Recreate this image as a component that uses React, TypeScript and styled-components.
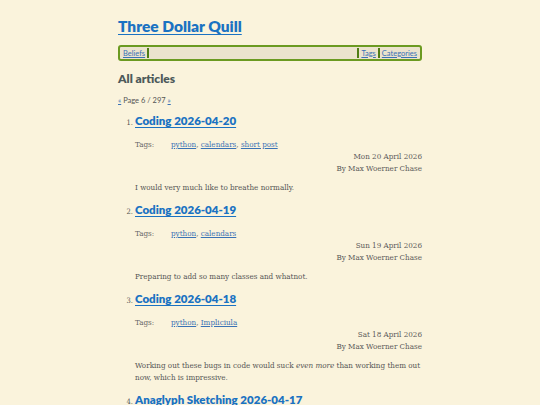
import React from "react";
import styled, { createGlobalStyle } from "styled-components";

const Global = createGlobalStyle`
  html, body { margin: 0; padding: 0; background: #faf3dc; }
  body { font-family: "DejaVu Serif Condensed", "DejaVu Serif", serif; color: #555; }
`;

const Page = styled.div`
  width: 304px;
  margin: 0 auto;
  padding-top: 15px;
`;

const SiteTitle = styled.h1`
  margin: 0;
  font-family: Lato, sans-serif;
  font-weight: 800;
  font-size: 15.5px;
  line-height: 22px;
  a { color: #1a72c2; text-decoration: underline; text-decoration-thickness: 1px; text-underline-offset: 2px; }
`;

const Nav = styled.nav`
  margin-top: 8px;
  display: flex;
  align-items: center;
  height: 12px;
  border: 2px solid #6b9a21;
  border-radius: 3px;
  background: #ebe3cd;
  padding: 0 1px;
  font-family: Lato, sans-serif;
  font-size: 7.5px;
`;

const NavLink = styled.a`
  color: #3a72b5;
  text-decoration: underline;
  padding: 0 2px;
`;

const Sep = styled.span`
  width: 2px;
  height: 10px;
  background: #4f7d15;
`;

const Spacer = styled.span`
  flex: 1;
`;

const H2 = styled.h2`
  margin: 10px 0 0;
  font-family: Lato, sans-serif;
  font-weight: 800;
  font-size: 12px;
  line-height: 16px;
  color: #4d5a5a;
`;

const Pager = styled.p`
  margin: 9px 0 0;
  font-family: Lato, sans-serif;
  font-size: 7.5px;
  line-height: 10px;
  color: #555;
  a { color: #3a72b5; }
`;

const List = styled.ol`
  margin: 6px 0 0;
  padding-left: 17px;
  font-size: 7.5px;
`;

const Item = styled.li`
  margin-bottom: 7px;
  &::marker { color: #555; }
`;

const ItemTitle = styled.h3`
  margin: 0;
  font-family: Lato, sans-serif;
  font-weight: 800;
  font-size: 11.5px;
  line-height: 18px;
  a { color: #1a72c2; text-decoration: underline; text-underline-offset: 2px; }
`;

const TagRow = styled.div`
  margin-top: 9px;
  display: flex;
  font-size: 8px;
  line-height: 12px;
  color: #666;
`;

const TagLabel = styled.span`
  width: 36px;
`;

const TagLink = styled.a`
  color: #3a72b5;
  text-decoration: underline;
`;

const Meta = styled.div`
  text-align: right;
  font-size: 8px;
  line-height: 12px;
  color: #5a5a5a;
`;

const Summary = styled.p`
  margin: 7px 0 0;
  font-size: 8px;
  line-height: 12px;
  color: #555;
`;

type Post = { title: string; tags: string[]; date: string; summary: React.ReactNode };

const posts: Post[] = [
  { title: "Coding 2026-04-20", tags: ["python", "calendars", "short post"], date: "Mon 20 April 2026", summary: "I would very much like to breathe normally." },
  { title: "Coding 2026-04-19", tags: ["python", "calendars"], date: "Sun 19 April 2026", summary: "Preparing to add so many classes and whatnot." },
  { title: "Coding 2026-04-18", tags: ["python", "Impliciula"], date: "Sat 18 April 2026", summary: <>Working out these bugs in code would suck <em>even more</em> than working them out now, which is impressive.</> },
  { title: "Anaglyph Sketching 2026-04-17", tags: ["art"], date: "Fri 17 April 2026", summary: "" },
];

export default function App() {
  return (
    <>
      <Global />
      <Page>
        <SiteTitle><a href="#">Three Dollar Quill</a></SiteTitle>
        <Nav>
          <NavLink href="#">Beliefs</NavLink>
          <Sep />
          <Spacer />
          <Sep />
          <NavLink href="#">Tags</NavLink>
          <Sep />
          <NavLink href="#">Categories</NavLink>
        </Nav>
        <H2>All articles</H2>
        <Pager><a href="#">«</a> Page 6 / 297 <a href="#">»</a></Pager>
        <List>
          {posts.map((p) => (
            <Item key={p.title}>
              <ItemTitle><a href="#">{p.title}</a></ItemTitle>
              <TagRow>
                <TagLabel>Tags:</TagLabel>
                <span>
                  {p.tags.map((t, i) => (
                    <React.Fragment key={t}>
                      {i > 0 && ", "}
                      <TagLink href="#">{t}</TagLink>
                    </React.Fragment>
                  ))}
                </span>
              </TagRow>
              <Meta>{p.date}<br />By Max Woerner Chase</Meta>
              <Summary>{p.summary}</Summary>
            </Item>
          ))}
        </List>
      </Page>
    </>
  );
}
